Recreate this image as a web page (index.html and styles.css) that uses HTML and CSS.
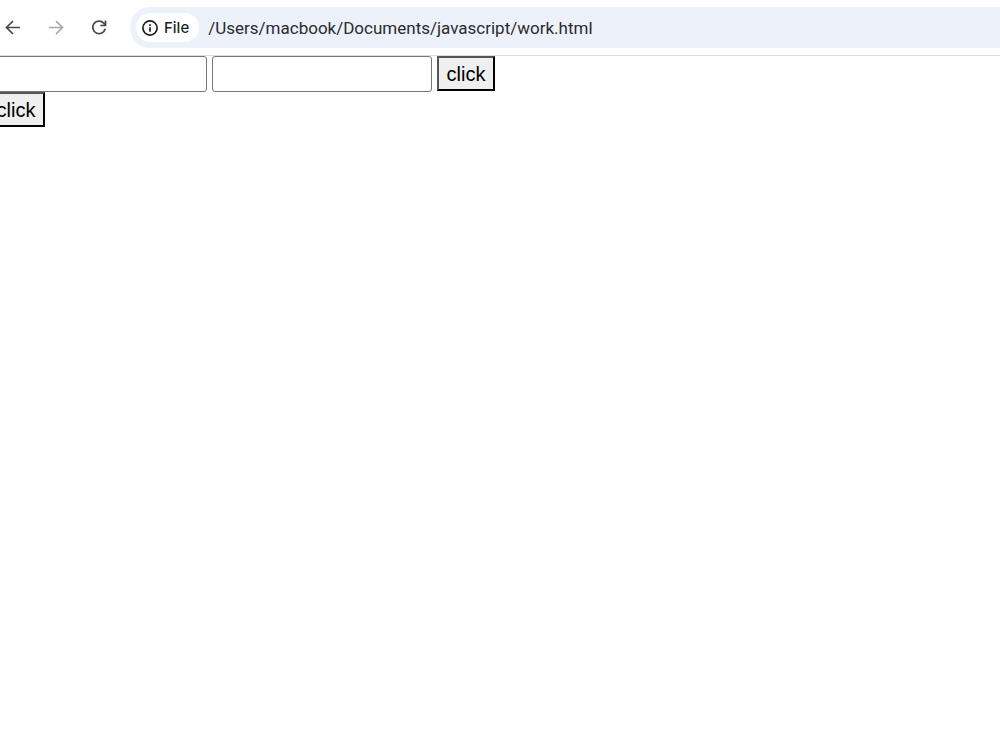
FILE: index.html
```html
<!DOCTYPE html>
<html lang="en">
<head>
  <meta charset="UTF-8" />
  <meta name="viewport" content="width=device-width, initial-scale=1.0" />
  <title>work.html</title>
  <link rel="stylesheet" href="styles.css">
</head>
<body>
  <header class="toolbar">
    <nav class="nav">
      <button class="nav-btn" type="button" aria-label="Back">
        <svg viewBox="0 0 16 16"><path d="M15 7.5H1.8M8 1L1.5 7.5L8 14" /></svg>
      </button>
      <button class="nav-btn off" type="button" aria-label="Forward" disabled>
        <svg viewBox="0 0 16 16"><path d="M1 7.5H14.2M8 1L14.5 7.5L8 14" /></svg>
      </button>
      <button class="nav-btn" type="button" aria-label="Reload">
        <svg viewBox="0 0 16 16"><path d="M14.2 8.8A6.3 6.3 0 1 1 12.8 3.2L14.3 5.1M14.5 0.6V5.5H9.3" /></svg>
      </button>
    </nav>
    <div class="omnibox">
      <button class="chip" type="button">
        <svg viewBox="0 0 16 16"><circle cx="8" cy="8" r="7.1" /><path d="M8 7.2V11.8M8 4.2V5.9" /></svg>
        File
      </button>
      <input class="url" type="text" aria-label="Address" value="/Users/macbook/Documents/javascript/work.html">
    </div>
  </header>
  <main class="page">
    <div class="row">
      <input class="field" type="text" aria-label="First value">
      <input class="field" type="text" aria-label="Second value">
      <button class="click" type="button">click</button>
    </div>
    <div class="row">
      <button class="click" type="button">click</button>
    </div>
  </main>
</body>
</html>
```
FILE: styles.css
```css
* { box-sizing: border-box; }
body { margin: 0; background: #fff; overflow-x: hidden; font-family: "Liberation Sans", Arial, sans-serif; }
svg { display: block; width: 16px; height: 16px; fill: none; stroke: currentColor; stroke-width: 1.7; }

.toolbar { display: flex; align-items: center; gap: 23px; padding: 7px 0 7px 5px; border-bottom: 1px solid #dedede; }
.nav { display: flex; gap: 27px; }
.nav-btn { padding: 0; border: none; background: none; color: #474747; }
.nav-btn.off { color: #a8a8a8; }
.omnibox { flex: 1; display: flex; align-items: center; gap: 9px; height: 41px; padding-left: 6px; background: #edf2fa; border-radius: 20px 0 0 20px; }
.chip { display: flex; align-items: center; gap: 6px; height: 29px; padding: 0 10px 0 6px; border: none; border-radius: 15px; background: #fff; color: #1f1f1f; font: 500 15px Inter, sans-serif; }
.url { flex: 1; min-width: 0; padding: 0; border: none; outline: none; background: none; color: #2a2b2d; font: 17px Roboto, sans-serif; }

/* the page is scrolled a little to the right */
.page { margin-left: -13px; }
.row { display: flex; align-items: flex-start; gap: 5px; }
.field { width: 220px; height: 36px; padding: 2px 4px; border: 1px solid #767676; border-radius: 3px; background: #fff; font: 20px "Liberation Sans", Arial, sans-serif; }
.click { width: 58px; height: 35px; padding: 2px 0 0; border: 2px outset #000; border-color: #555 #000 #000 #555; background: #efefef; color: #000; font: 20px "Liberation Sans", Arial, sans-serif; }
```
